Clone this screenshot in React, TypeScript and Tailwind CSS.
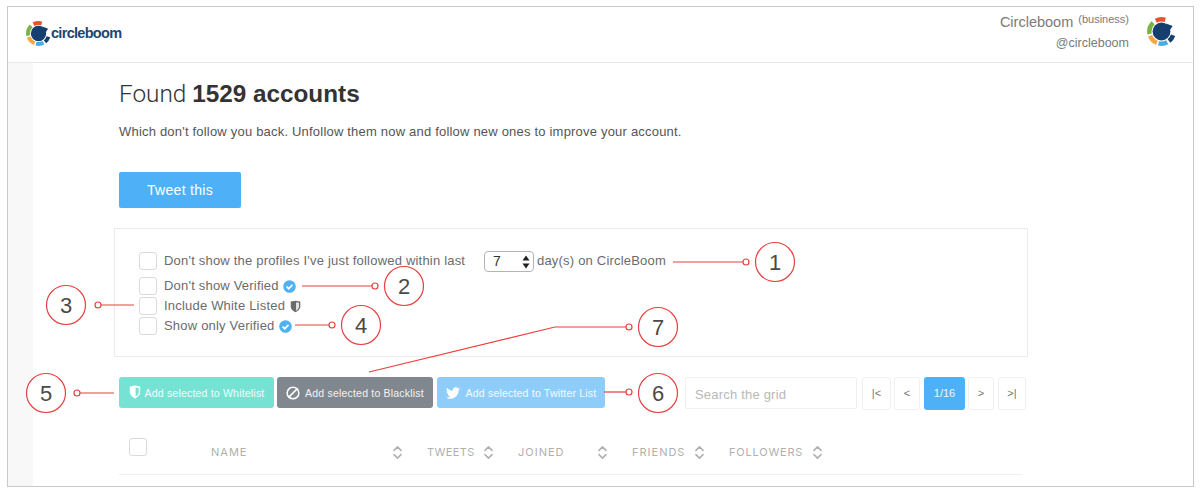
import React from 'react';
import { Ban, ChevronsUpDown } from 'lucide-react';
import { FaTwitter } from 'react-icons/fa';

const arc = (c: number, r: number, a1: number, a2: number) => {
  const p = (a: number) => {
    const t = (a * Math.PI) / 180;
    return `${(c + r * Math.cos(t)).toFixed(2)} ${(c + r * Math.sin(t)).toFixed(2)}`;
  };
  return `M${p(a1)} A${r} ${r} 0 0 1 ${p(a2)}`;
};

const Logo = ({ className }: { className: string }) => (
  <svg viewBox="0 0 26 26" className={className} fill="none">
    <path d={arc(13, 10.9, -118, -72)} stroke="#e8532f" strokeWidth="4" />
    <path d={arc(13, 10.9, 168, 226)} stroke="#7cb342" strokeWidth="4" />
    <path d={arc(13, 10.9, 112, 160)} stroke="#f5a742" strokeWidth="4" />
    <path d={arc(13, 10.9, 62, 104)} stroke="#45ace6" strokeWidth="4" />
    <path d={arc(13, 10.9, 18, 52)} stroke="#153f6e" strokeWidth="4" />
    <circle cx="13" cy="13" r="8" fill="#153f6e" />
    <path d="M17 5.8 L23 8 L20 12.5 Z" fill="#153f6e" />
  </svg>
);

const Verified = () => (
  <svg viewBox="0 0 12 12" className="w-[13px] h-[13px] ml-[4px] shrink-0">
    <circle cx="6" cy="6" r="5.8" fill="#4eb1f0" />
    <path d="M3.3 6.1 L5.3 8 L8.8 4.4" stroke="#fff" strokeWidth="1.6" fill="none" />
  </svg>
);

const Shield = ({ className, left, right }: { className: string; left: string; right: string }) => (
  <svg viewBox="0 0 12 14" className={className}>
    <path d="M.8 1.5 L6 .6 L11.2 1.5 V7 C11.2 10 8.6 12.2 6 13.4 C3.4 12.2 .8 10 .8 7 Z" fill={left} />
    <path d="M6.6 2.4 L9.8 3 V7 C9.8 9 8.4 10.6 6.6 11.6 Z" fill={right} />
  </svg>
);

const Box = ({ className = '' }: { className?: string }) => (
  <span className={`block w-[18px] h-[18px] shrink-0 rounded-[3px] border border-[#dadada] bg-white ${className}`} />
);

const SortIcon = () => <ChevronsUpDown className="w-[17px] h-[17px] text-[#b0b0b0]" strokeWidth={2.2} />;

const Callouts = () => (
  <svg className="absolute left-0 top-0 w-[1200px] h-[494px] pointer-events-none" viewBox="0 0 1200 494" fill="none">
    <g stroke="#e8403f" strokeWidth="1.2">
      <path d="M673 262 H743" />
      <path d="M302 286 H372" />
      <path d="M101 305 H134" />
      <path d="M295 325 H329" />
      <path d="M626 327 H555 L369 372" />
      <path d="M80 393 H114" />
      <path d="M604 392 H626" />
    </g>
    <g stroke="#e8403f" fill="#fff">
      {[
        [746, 262],
        [375, 286],
        [98, 305],
        [332, 325],
        [629, 327],
        [77, 393],
        [629, 392],
      ].map(([x, y]) => (
        <circle key={`${x}-${y}`} cx={x} cy={y} r="3" strokeWidth="1.2" />
      ))}
    </g>
    {[
      ['1', 775, 262],
      ['2', 404, 286],
      ['3', 66, 305],
      ['4', 361, 325],
      ['7', 658, 327],
      ['5', 46, 393],
      ['6', 658, 393],
    ].map(([n, x, y]) => (
      <g key={n}>
        <circle cx={x} cy={y} r="19.5" fill="#fff" stroke="#e8403f" strokeWidth="1.2" />
        <text x={x} y={Number(y) + 8} textAnchor="middle" fontSize="22" fill="#4a4a4a" fontFamily="'Liberation Sans', Arial, sans-serif">
          {n}
        </text>
      </g>
    ))}
  </svg>
);

export default function App() {
  return (
    <div className="relative w-[1200px] h-[494px] overflow-hidden bg-white pl-[7px] pt-[6px] font-['Liberation_Sans',Arial,sans-serif]">
      <div className="w-[1187px] h-[481px] border border-[#c9c9c9] overflow-hidden flex flex-col">
        {/* top bar */}
        <header className="h-[56px] shrink-0 border-b border-[#e9e9e9] flex items-center justify-between pl-[18px] pr-[17px]">
          <div className="flex items-center mb-[2px]">
            <Logo className="w-[25px] h-[25px]" />
            <span className="text-[14.5px] font-bold tracking-[-0.7px] text-[#1c4674]">
              circleboom
            </span>
          </div>
          <div className="flex items-center mb-[6px]">
            <div className="text-right text-[#7a7a7a]">
              <div className="leading-[20px] text-[14.5px] h-[23px]">
                Circleboom <sup className="text-[11px] ml-[1px] -top-[4px]">(business)</sup>
              </div>
              <div className="text-[12.5px] leading-[16px]">@circleboom</div>
            </div>
            <Logo className="w-[29px] h-[29px] ml-[18px]" />
          </div>
        </header>

        <div className="flex flex-1 min-h-0">
          <aside className="w-[25px] shrink-0 bg-[#f8f8f8]" />
          <main className="flex-1 pl-[86px]">
            <h1 className="mt-[15px] text-[24.3px] leading-[32px] text-[#333] font-['Roboto',sans-serif] font-light">
              Found <span className="font-bold font-['Liberation_Sans',Arial,sans-serif]">1529 accounts</span>
            </h1>
            <p className="mt-[12px] text-[13px] leading-[20px] tracking-[0.2px] text-[#555]">
              Which don't follow you back. Unfollow them now and follow new ones to improve your account.
            </p>
            <button className="mt-[30px] w-[122px] h-[36px] rounded-[2px] bg-[#4eb1f8] text-white text-[14px] tracking-[0.3px]">
              Tweet this
            </button>

            {/* filters */}
            <section className="mt-[20px] -ml-[5px] w-[914px] h-[129px] border border-[#ebebeb] pl-[24px] pt-[20px] text-[13px] tracking-[0.2px] text-[#6b6b6b]">
              <div className="flex items-center h-[24px]">
                <Box />
                <span className="ml-[7px] w-[320px]">Don't show the profiles I've just followed within last</span>
                <div className="relative w-[50px] h-[21px] rounded-[4px] border border-[#b4b4b4] text-[14px] text-[#333] pl-[8px] leading-[19px]">
                  7
                  <svg viewBox="0 0 8 14" className="absolute right-[3px] top-[3px] w-[8px] h-[14px]">
                    <path d="M4 .5 L7.5 5.5 H.5 Z M4 13.5 L.5 8.5 H7.5 Z" fill="#222" />
                  </svg>
                </div>
                <span className="ml-[3px]">day(s) on CircleBoom</span>
              </div>
              <div className="flex items-center h-[20px] mt-[3px]">
                <Box />
                <span className="ml-[7px]">Don't show Verified</span>
                <Verified />
              </div>
              <div className="flex items-center h-[20px]">
                <Box />
                <span className="ml-[7px]">Include White Listed</span>
                <Shield className="w-[11px] h-[13px] ml-[5px]" left="#6b6b6b" right="#e4e4e4" />
              </div>
              <div className="flex items-center h-[20px]">
                <Box />
                <span className="ml-[7px]">Show only Verified</span>
                <Verified />
              </div>
            </section>

            {/* actions */}
            <div className="mt-[20px] flex items-start w-[908px]">
              <button className="flex items-center justify-center w-[155px] h-[31px] rounded-[3px] bg-[#76e2d4] text-white/90 text-[10.5px] tracking-[0.2px]">
                <Shield className="w-[12px] h-[14px] mr-[4px] -mt-[1px]" left="#fff" right="#76e2d4" />
                <span className="pt-[2px]">Add selected to Whitelist</span>
              </button>
              <button className="ml-[3px] flex items-center justify-center w-[156px] h-[31px] rounded-[3px] bg-[#80878f] text-white/90 text-[10.5px] tracking-[0.2px]">
                <Ban className="w-[14px] h-[14px] mr-[5px] text-white -scale-x-100" strokeWidth={2.6} />
                <span className="pt-[2px]">Add selected to Blacklist</span>
              </button>
              <button className="ml-[4px] flex items-center justify-center w-[168px] h-[31px] rounded-[3px] bg-[#8ecdfa] text-white/90 text-[10.5px] tracking-[0.2px]">
                <FaTwitter className="w-[14px] h-[14px] mr-[6px] text-white" />
                <span className="pt-[2px]">Add selected to Twitter List</span>
              </button>
              <div className="ml-[80px] w-[172px] h-[32px] rounded-[2px] border border-[#efefef] pl-[9px] text-[13px] leading-[33px] tracking-[0.2px] text-[#b8b8b8]">
                Search the grid
              </div>
              <div className="ml-[5px] flex items-start text-[11px] text-[#777]">
                <span className="w-[29px] h-[33px] rounded-[3px] border border-[#f0f0f0] text-center leading-[31px]">|&lt;</span>
                <span className="ml-[3px] w-[26px] h-[33px] rounded-[3px] border border-[#f0f0f0] text-center leading-[31px]">&lt;</span>
                <span className="ml-[4px] w-[41px] h-[33px] rounded-[3px] bg-[#4eb1f8] text-white/90 text-center leading-[33px]">1/16</span>
                <span className="ml-[3px] w-[26px] h-[33px] rounded-[3px] border border-[#f0f0f0] text-center leading-[31px]">&gt;</span>
                <span className="ml-[4px] w-[28px] h-[33px] rounded-[3px] border border-[#f0f0f0] text-center leading-[31px]">&gt;|</span>
              </div>
            </div>

            {/* grid head */}
            <div className="mt-[28px] w-[903px] h-[37px] border-b border-[#f0f0f0] flex items-start text-[11px] tracking-[1px] text-[#b0b0b0] font-['Inter',sans-serif]">
              <Box className="ml-[10px]" />
              <div className="ml-[64px] w-[216px] flex items-center justify-between pt-[6px]"><span>NAME</span><span className="mr-[21px]"><SortIcon /></span></div>
              <div className="w-[91px] flex items-center justify-between pt-[6px]"><span className="tracking-[0.4px]">TWEETS</span><span className="mr-[21px]"><SortIcon /></span></div>
              <div className="w-[114px] flex items-center justify-between pt-[6px]"><span>JOINED</span><span className="mr-[21px]"><SortIcon /></span></div>
              <div className="w-[97px] flex items-center justify-between pt-[6px]"><span>FRIENDS</span><span className="mr-[21px]"><SortIcon /></span></div>
              <div className="w-[97px] flex items-center justify-between pt-[6px]"><span className="tracking-[0.8px]">FOLLOWERS</span><SortIcon /></div>
            </div>
          </main>
        </div>
      </div>
      <Callouts />
    </div>
  );
}
